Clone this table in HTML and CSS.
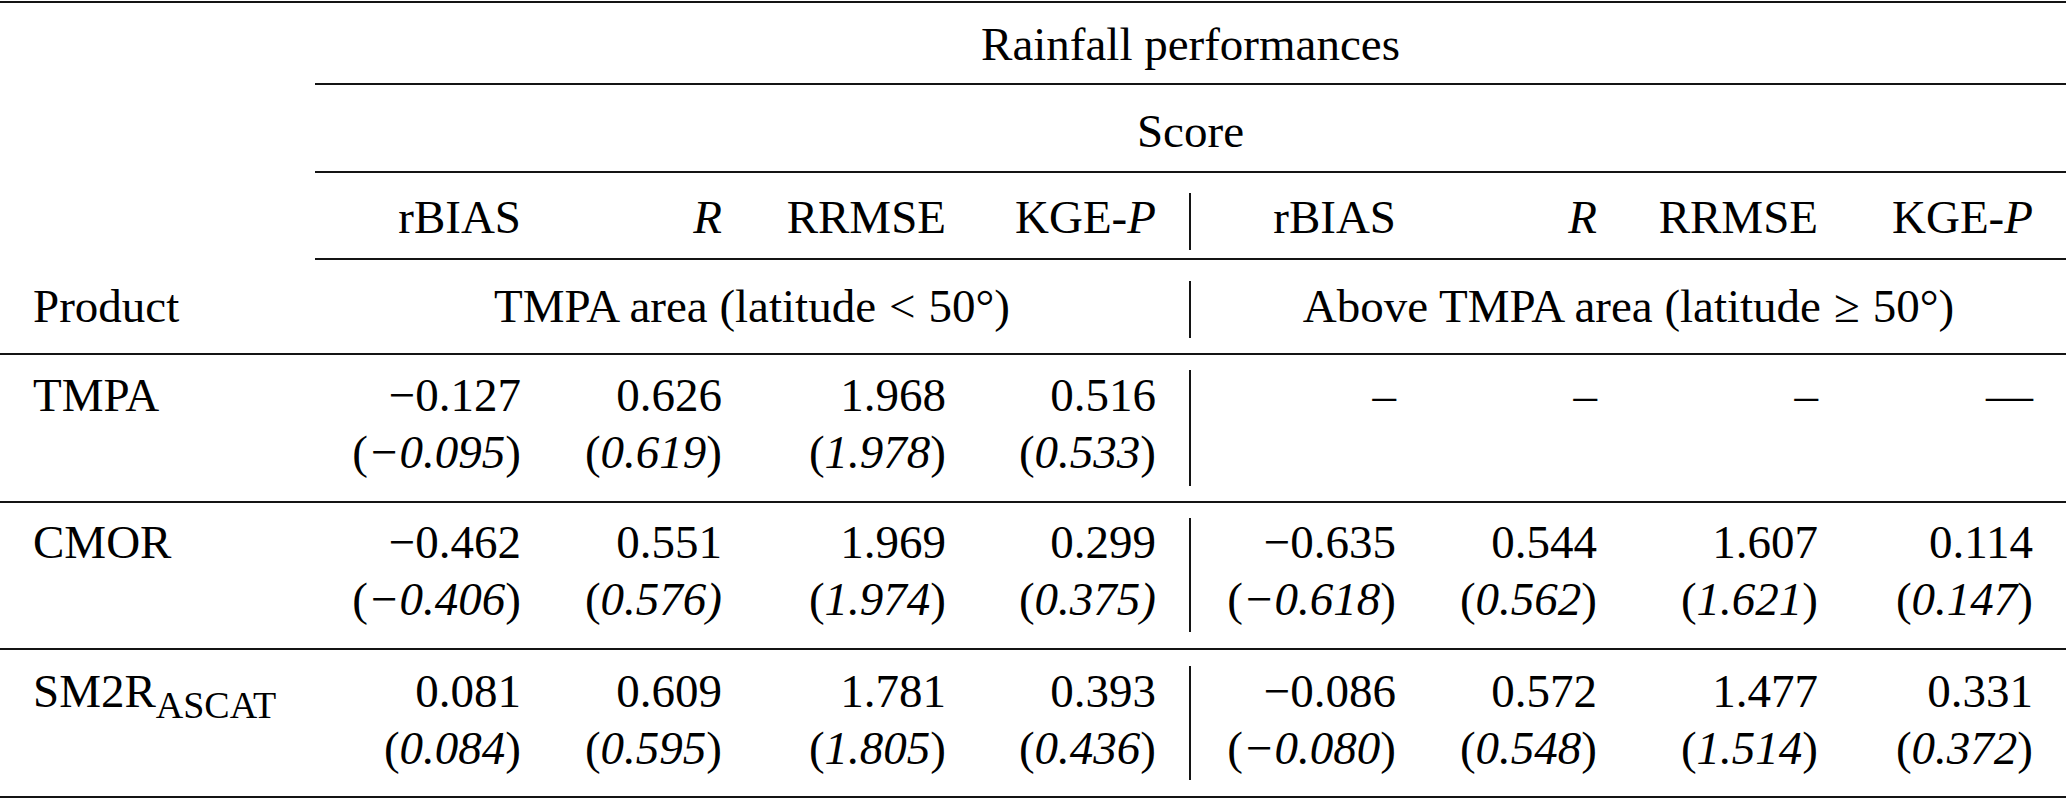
FILE: index.html
```html
<!DOCTYPE html>
<html lang="en">
<head>
<meta charset="utf-8">
<title>Rainfall performances</title>
<link rel="stylesheet" href="styles.css">
</head>
<body>
<div class="tbl">
  <div class="rule full"></div>

  <div class="cell ra"></div>
  <div class="cell span ra">Rainfall performances</div>
  <div class="rule part"></div>

  <div class="cell rb"></div>
  <div class="cell span rb">Score</div>
  <div class="rule part"></div>

  <div class="cell rc"></div>
  <div class="cell num rc">rBIAS</div>
  <div class="cell num rc"><i>R</i></div>
  <div class="cell num rc">RRMSE</div>
  <div class="cell num rc">KGE-<i>P</i></div>
  <div class="vline vc"></div>
  <div class="cell num rc">rBIAS</div>
  <div class="cell num rc"><i>R</i></div>
  <div class="cell num rc">RRMSE</div>
  <div class="cell num rc">KGE-<i>P</i></div>
  <div class="rule part"></div>

  <div class="cell name rd">Product</div>
  <div class="cell group rd">TMPA area (latitude<span class="rel">&lt;</span>50°)</div>
  <div class="vline vd"></div>
  <div class="cell group rd">Above TMPA area (latitude<span class="rel">≥</span>50°)</div>
  <div class="rule full"></div>

  <div class="cell name rt">TMPA</div>
  <div class="cell num rt"><span class="ln">−0.127</span><span class="ln">(<i>−0.095</i>)</span></div>
  <div class="cell num rt"><span class="ln">0.626</span><span class="ln">(<i>0.619</i>)</span></div>
  <div class="cell num rt"><span class="ln">1.968</span><span class="ln">(<i>1.978</i>)</span></div>
  <div class="cell num rt"><span class="ln">0.516</span><span class="ln">(<i>0.533</i>)</span></div>
  <div class="vline vt"></div>
  <div class="cell num rt"><span class="ln">–</span></div>
  <div class="cell num rt"><span class="ln">–</span></div>
  <div class="cell num rt"><span class="ln">–</span></div>
  <div class="cell num rt"><span class="ln">—</span></div>
  <div class="rule full"></div>

  <div class="cell name rm">CMOR</div>
  <div class="cell num rm"><span class="ln">−0.462</span><span class="ln">(<i>−0.406</i>)</span></div>
  <div class="cell num rm"><span class="ln">0.551</span><span class="ln">(<i>0.576)</i></span></div>
  <div class="cell num rm"><span class="ln">1.969</span><span class="ln">(<i>1.974</i>)</span></div>
  <div class="cell num rm"><span class="ln">0.299</span><span class="ln">(<i>0.375)</i></span></div>
  <div class="vline vm"></div>
  <div class="cell num rm"><span class="ln">−0.635</span><span class="ln">(<i>−0.618</i>)</span></div>
  <div class="cell num rm"><span class="ln">0.544</span><span class="ln">(<i>0.562</i>)</span></div>
  <div class="cell num rm"><span class="ln">1.607</span><span class="ln">(<i>1.621</i>)</span></div>
  <div class="cell num rm"><span class="ln">0.114</span><span class="ln">(<i>0.147</i>)</span></div>
  <div class="rule full"></div>

  <div class="cell name rs">SM2R<span class="sub">ASCAT</span></div>
  <div class="cell num rs"><span class="ln">0.081</span><span class="ln">(<i>0.084</i>)</span></div>
  <div class="cell num rs"><span class="ln">0.609</span><span class="ln">(<i>0.595</i>)</span></div>
  <div class="cell num rs"><span class="ln">1.781</span><span class="ln">(<i>1.805</i>)</span></div>
  <div class="cell num rs"><span class="ln">0.393</span><span class="ln">(<i>0.436</i>)</span></div>
  <div class="vline vs"></div>
  <div class="cell num rs"><span class="ln">−0.086</span><span class="ln">(<i>−0.080</i>)</span></div>
  <div class="cell num rs"><span class="ln">0.572</span><span class="ln">(<i>0.548</i>)</span></div>
  <div class="cell num rs"><span class="ln">1.477</span><span class="ln">(<i>1.514</i>)</span></div>
  <div class="cell num rs"><span class="ln">0.331</span><span class="ln">(<i>0.372</i>)</span></div>
  <div class="rule full"></div>
</div>
</body>
</html>
```

FILE: styles.css
```css
html, body {
  margin: 0;
  padding: 0;
  background: #ffffff;
}

body {
  color: #000000;
  font-family: "Liberation Serif", "Times New Roman", Times, serif;
  font-size: 47px;
}

.tbl {
  display: grid;
  grid-template-columns: 315px 239px 201px 224px 210px 2px 238px 201px 221px 215px;
  width: 2066px;
  margin-top: 1px;
}

.rule {
  height: 2px;
  background: #141414;
}

.rule.full {
  grid-column: 1 / -1;
}

.rule.part {
  grid-column: 2 / -1;
}

.cell {
  line-height: 57px;
  white-space: nowrap;
}

.span {
  grid-column: 2 / -1;
  text-align: center;
}

.group {
  grid-column: span 4;
  text-align: center;
}

.num {
  text-align: right;
  padding-right: 33px;
}

.name {
  padding-left: 33px;
}

.ln {
  display: block;
}

.rel {
  padding: 0 13px;
}

.sub {
  font-size: 38px;
  line-height: 0;
  vertical-align: -11px;
}

.vline {
  background: #141414;
}

/* row paddings */
.ra { padding-top: 13px; padding-bottom: 10px; }
.rb { padding-top: 18px; padding-bottom: 11px; }
.rc { padding-top: 16px; padding-bottom: 12px; }
.rd { padding-top: 18px; padding-bottom: 18px; }
.rt { padding-top: 12px; padding-bottom: 20px; }
.rm { padding-top: 11px; padding-bottom: 20px; }
.rs { padding-top: 13px; padding-bottom: 19px; }

/* vertical separator insets */
.vc { margin: 20px 0 8px; }
.vd { margin: 21px 0 15px; }
.vt { margin: 15px 0 15px; }
.vm { margin: 15px 0 16px; }
.vs { margin: 16px 0 16px; }
```
